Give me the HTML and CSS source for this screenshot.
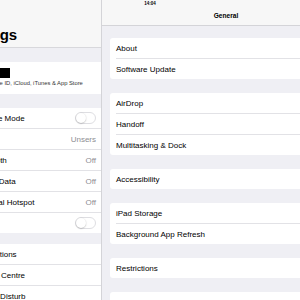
FILE: index.html
```html
<!DOCTYPE html>
<html lang="en">
<head>
  <meta charset="UTF-8" />
  <meta name="viewport" content="width=device-width, initial-scale=1.0" />
  <title>Settings - General</title>
  <link rel="stylesheet" href="styles.css">
</head>
<body>

  <div class="screen">
    <div class="status">14:04</div>

    <aside class="master">
      <div class="master-inner">
        <header class="master-head">
          <h1>Settings</h1>
        </header>

        <div class="profile">
          <div class="profile-name"><span class="redacted"></span></div>
          <div class="profile-sub">Apple ID, iCloud, iTunes &amp; App Store</div>
        </div>

        <ul class="list">
          <li class="row"><span>Airplane Mode</span><span class="switch"></span></li>
          <li class="row"><span>Wi-Fi</span><span class="value">Unsers</span></li>
          <li class="row"><span>Bluetooth</span><span class="value">Off</span></li>
          <li class="row"><span>Mobile Data</span><span class="value">Off</span></li>
          <li class="row"><span>Personal Hotspot</span><span class="value">Off</span></li>
          <li class="row"><span>VPN</span><span class="switch"></span></li>
        </ul>

        <ul class="list">
          <li class="row"><span>Notifications</span></li>
          <li class="row"><span>Control Centre</span></li>
          <li class="row"><span>Do Not Disturb</span></li>
        </ul>
      </div>
    </aside>

    <main class="detail">
      <header class="detail-nav">
        <span class="nav-title">General</span>
      </header>

      <div class="detail-body">
        <div class="group">
          <div class="drow">About</div>
          <div class="drow">Software Update</div>
        </div>
        <div class="group">
          <div class="drow">AirDrop</div>
          <div class="drow">Handoff</div>
          <div class="drow">Multitasking &amp; Dock</div>
        </div>
        <div class="group">
          <div class="drow">Accessibility</div>
        </div>
        <div class="group">
          <div class="drow">iPad Storage</div>
          <div class="drow">Background App Refresh</div>
        </div>
        <div class="group">
          <div class="drow">Restrictions</div>
        </div>
        <div class="group">
          <div class="drow">Date &amp; Time</div>
        </div>
      </div>
    </main>
  </div>

</body>
</html>
```

FILE: styles.css
```css
body {
  font-family: 'Liberation Sans', Arial, sans-serif;
  margin: 0;
  padding: 0;
  background-color: #efeff4;
  color: #000;
  overflow: hidden;
}
ul {
  list-style: none;
  margin: 0;
  padding: 0;
}
.screen {
  position: relative;
  display: flex;
  width: 300px;
  height: 300px;
  overflow: hidden;
}
.status {
  position: absolute;
  top: 1px;
  left: 0;
  width: 300px;
  text-align: center;
  font-size: 4.5px;
  line-height: 6px;
  font-weight: 700;
}

/* master list (left) */
.master {
  flex: none;
  width: 101px;
  height: 300px;
  overflow: hidden;
  background-color: #efeff4;
  border-right: 1px solid #d4d4d8;
}
.master-inner {
  margin-left: -60px;
}
.master-head {
  height: 47px;
  background-color: #f7f7f7;
  border-bottom: 1px solid #d8d8dc;
}
.master-head h1 {
  margin: 0;
  padding: 26px 0 0 18px;
  font-size: 15px;
  line-height: 18px;
  font-weight: 700;
}
.profile {
  margin-top: 14px;
  height: 32px;
  box-sizing: border-box;
  padding: 6px 0 0 48px;
  background: white;
}
.profile-name {
  height: 10px;
}
.redacted {
  display: block;
  width: 22px;
  height: 10px;
  background: #000;
}
.profile-sub {
  margin-top: 1px;
  font-size: 5.8px;
  line-height: 8px;
  color: #333;
}
.list {
  margin-top: 14px;
  background: white;
}
.list + .list {
  margin-top: 11px;
}
.row {
  display: flex;
  align-items: center;
  justify-content: space-between;
  height: 20px;
  margin-left: 33px;
  padding-right: 5px;
  font-size: 8px;
}
.row + .row {
  border-top: 1px solid #e2e2e6;
}
.value {
  color: #8e8e93;
}
.switch {
  position: relative;
  width: 19px;
  height: 10px;
  border: 1px solid #dedee2;
  border-radius: 6px;
  background: white;
}
.switch::after {
  content: "";
  position: absolute;
  top: 0;
  left: 0;
  width: 10px;
  height: 10px;
  border-radius: 50%;
  background: white;
  box-shadow: 0 0.5px 1.5px rgba(0, 0, 0, 0.3);
}

/* detail pane (right) */
.detail {
  flex: none;
  width: 248px;
  background-color: #efeff4;
}
.detail-nav {
  height: 25px;
  background-color: #f7f7f7;
  border-bottom: 1px solid #d4d4d8;
  display: flex;
  align-items: flex-end;
  justify-content: center;
}
.nav-title {
  font-size: 6.6px;
  font-weight: 700;
  line-height: 8px;
  margin-bottom: 5px;
}
.detail-body {
  padding-top: 12px;
}
.group {
  margin: 0 0 14px 8px;
  background: white;
  border-radius: 3px 0 0 3px;
}
.drow {
  display: flex;
  align-items: center;
  height: 20px;
  margin-left: 6px;
  font-size: 8px;
}
.drow + .drow {
  border-top: 1px solid #e2e2e6;
}
```
